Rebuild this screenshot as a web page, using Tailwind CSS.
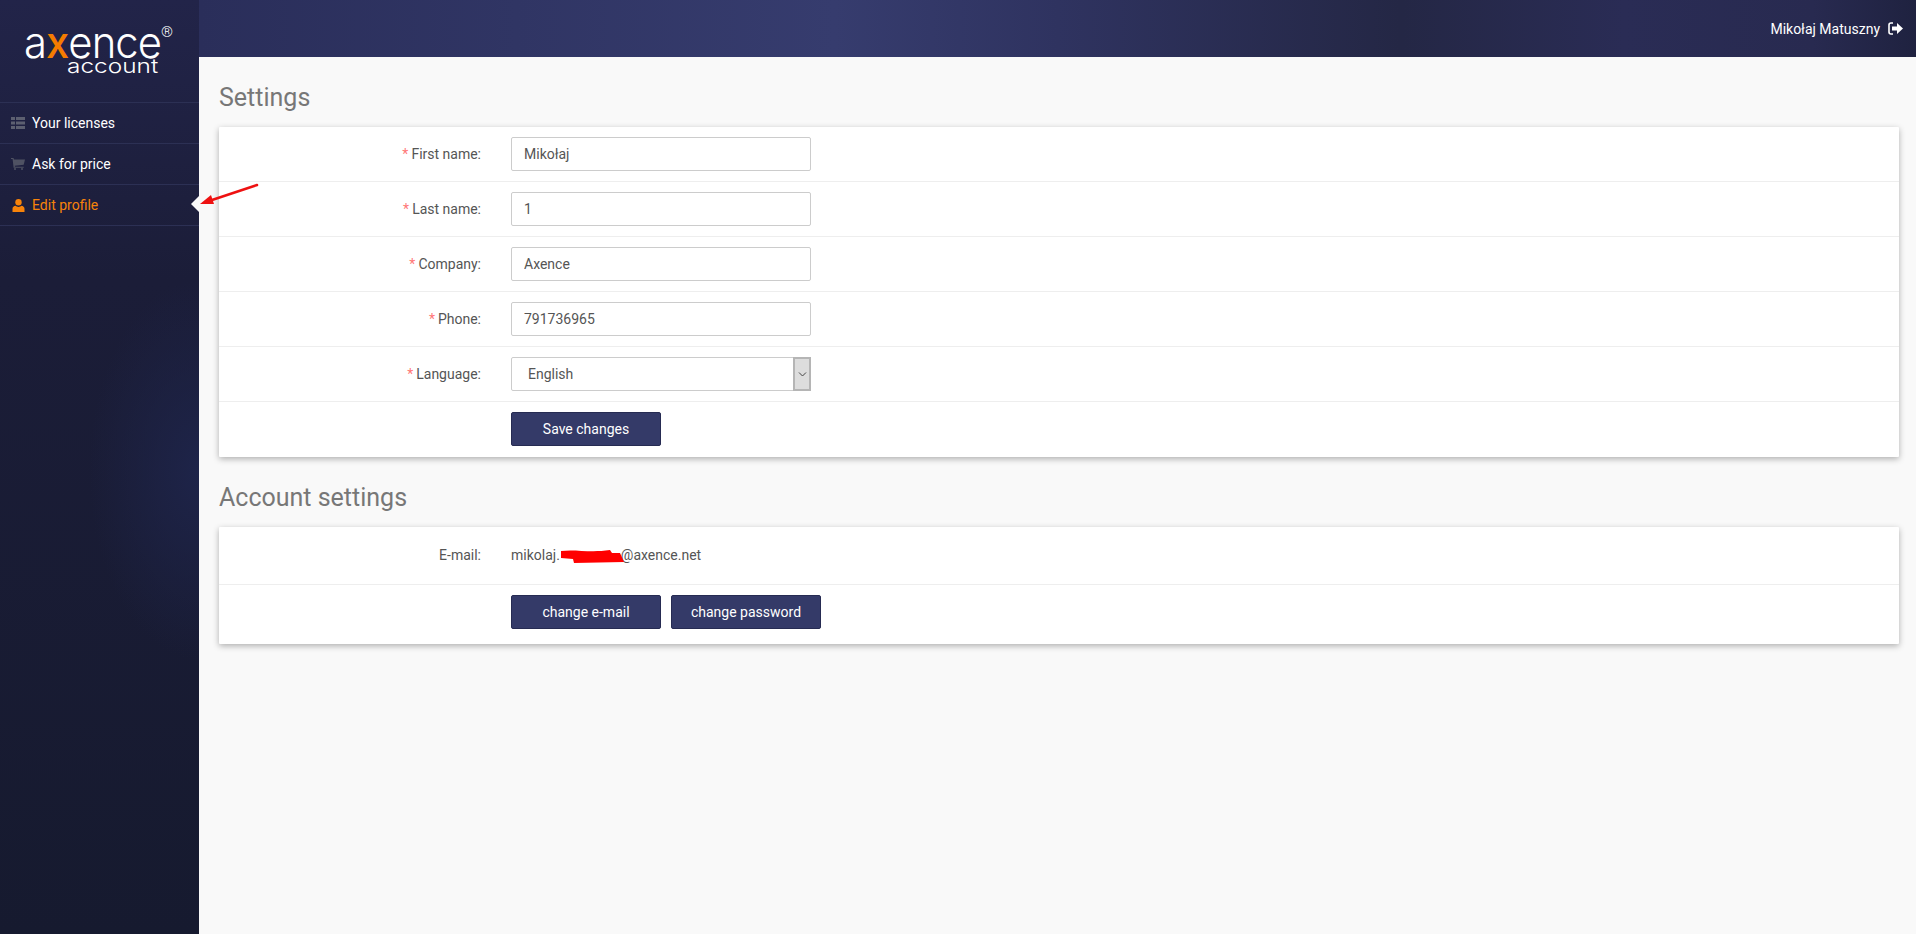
<!DOCTYPE html>
<html lang="en">
<head>
    <meta charset="UTF-8">
    <meta name="viewport" content="width=device-width, initial-scale=1.0">
    <title>Axence Account - Settings</title>
    <script src="https://cdn.jsdelivr.net/npm/@tailwindcss/browser@4"></script>
</head>
<body class="h-screen overflow-hidden font-['Roboto',sans-serif] text-sm text-[#555]">
    <div class="flex h-[934px]">
        <!-- sidebar -->
        <aside class="w-[199px] shrink-0 bg-[radial-gradient(ellipse_110px_190px_at_199px_470px,#1e2449_0%,transparent_100%),linear-gradient(180deg,#222449_0%,#1b1d38_30%,#161a2f_100%)]">
            <div class="relative h-[102px] pl-[24px] pt-[26px] text-white font-['Inter',sans-serif] font-light">
                <div class="h-[32px] text-[44px] leading-[32px] tracking-[-1px] origin-left scale-x-[0.95]">a<span class="text-[#f57c00] font-medium">x</span>ence</div>
                <div class="ml-[43px] mt-[1px] h-[14px] text-[20px] leading-[14px] origin-left scale-x-[1.22]">account</div>
                <span class="absolute left-[161px] top-[22px] text-[15px] leading-[20px] font-['Roboto',sans-serif]">®</span>
            </div>
            <nav class="border-t border-[#2c3054] text-white">
                <a class="flex items-center h-[41px] border-b border-[#2c3054]">
                    <svg class="w-[14px] h-[12px] ml-[11px] mr-[7px]" viewBox="0 0 14 12" fill="#5c5f70">
                        <rect x="0" y="0" width="4" height="3"/><rect x="5" y="0" width="9" height="3"/>
                        <rect x="0" y="4.5" width="4" height="3"/><rect x="5" y="4.5" width="9" height="3"/>
                        <rect x="0" y="9" width="4" height="3"/><rect x="5" y="9" width="9" height="3"/>
                    </svg>
                    <span>Your licenses</span>
                </a>
                <a class="flex items-center h-[41px] border-b border-[#2c3054]">
                    <svg class="w-[14px] h-[12px] ml-[11px] mr-[7px]" viewBox="0 0 14 12" fill="#4f5263">
                        <path d="M0 0h2.5l.5 1.500h11l-1.300 5.200-9 1 .3 1h8.700v1H2.600L1.600 1H0z"/>
                        <circle cx="4" cy="11" r="1"/><circle cx="11" cy="11" r="1"/>
                    </svg>
                    <span>Ask for price</span>
                </a>
                <a class="flex items-center h-[41px] border-b border-[#2c3054] text-[#f7830a]">
                    <svg class="w-[13px] h-[13px] ml-[12px] mr-[7px]" viewBox="0 0 13 13" fill="#f7830a">
                        <circle cx="6.500" cy="3.300" r="3.200"/>
                        <path d="M0.500 13V9.800C0.500 8 2 7 3.400 6.800 4.200 7.500 5.300 7.900 6.500 7.900S8.800 7.500 9.600 6.800C11 7 12.500 8 12.500 9.800V13z"/>
                    </svg>
                    <span>Edit profile</span>
                </a>
            </nav>
        </aside>

        <!-- right column -->
        <div class="flex-1 flex flex-col min-w-0">
            <header class="h-[57px] shrink-0 flex items-center justify-end pr-[13px] text-white bg-[linear-gradient(90deg,#2a2e5a_0%,#363c6e_37%,#2f3360_50%,#242745_70%,#2a2c55_83%,#282a50_94%,#1f2240_100%)]">
                <span>Mikołaj Matuszny</span>
                <svg class="w-[15px] h-[13px] ml-[8px]" viewBox="0 0 15 13">
                    <path d="M5 1H3a2 2 0 0 0-2 2v7a2 2 0 0 0 2 2h2" fill="none" stroke="#fff" stroke-width="1.600"/>
                    <path d="M4 4.500h5V1l6 5.500-6 5.500V8.500H4z" fill="#fff"/>
                </svg>
            </header>

            <main class="relative flex-1 bg-[#f9f9f9] pl-[20px] pr-[17px]">
                <!-- caret on the active menu item -->
                <div class="absolute left-[-8px] top-[139px] w-0 h-0 border-y-[8px] border-y-transparent border-r-[8px] border-r-[#f9f9f9]"></div>
                <!-- red annotation arrow -->
                <svg class="absolute left-[-2px] top-[122px] w-[64px] h-[30px]" viewBox="0 0 64 30">
                    <path d="M60 6L12 22" stroke="#ee1111" stroke-width="2.500" stroke-linecap="round"/>
                    <path d="M3 25L14 16 17 25z" fill="#ee1111"/>
                </svg>

                <div class="h-[70px] pt-[12px] flex items-center text-[25px] text-[#777]">Settings</div>
                <section class="bg-white shadow-[0_2px_6px_rgba(0,0,0,0.3)] rounded-[1px]">
                    <div class="flex items-center h-[55px] border-b border-[#eee]">
                        <label class="w-[262px] text-right"><span class="text-[#f77] mr-[3px]">*</span>First name:</label>
                        <input class="ml-[30px] w-[300px] h-[34px] px-3 border border-[#ccc] rounded-[2px] text-[#555]" value="Mikołaj">
                    </div>
                    <div class="flex items-center h-[55px] border-b border-[#eee]">
                        <label class="w-[262px] text-right"><span class="text-[#f77] mr-[3px]">*</span>Last name:</label>
                        <input class="ml-[30px] w-[300px] h-[34px] px-3 border border-[#ccc] rounded-[2px] text-[#555]" value="1">
                    </div>
                    <div class="flex items-center h-[55px] border-b border-[#eee]">
                        <label class="w-[262px] text-right"><span class="text-[#f77] mr-[3px]">*</span>Company:</label>
                        <input class="ml-[30px] w-[300px] h-[34px] px-3 border border-[#ccc] rounded-[2px] text-[#555]" value="Axence">
                    </div>
                    <div class="flex items-center h-[55px] border-b border-[#eee]">
                        <label class="w-[262px] text-right"><span class="text-[#f77] mr-[3px]">*</span>Phone:</label>
                        <input class="ml-[30px] w-[300px] h-[34px] px-3 border border-[#ccc] rounded-[2px] text-[#555]" value="791736965">
                    </div>
                    <div class="flex items-center h-[55px] border-b border-[#eee]">
                        <label class="w-[262px] text-right"><span class="text-[#f77] mr-[3px]">*</span>Language:</label>
                        <div class="relative ml-[30px] w-[300px] h-[34px]">
                            <select class="appearance-none w-full h-full pl-4 border border-[#ccc] rounded-[2px] bg-white text-[#555]">
                                <option>English</option>
                            </select>
                            <div class="absolute right-0 top-0 w-[18px] h-[34px] bg-[#ddd] border-2 border-[#b5b5b5] flex items-center justify-center">
                                <svg class="w-[9px] h-[5px]" viewBox="0 0 9 5"><path d="M1 0.500L4.500 4 8 0.500" fill="none" stroke="#444" stroke-width="1"/></svg>
                            </div>
                        </div>
                    </div>
                    <div class="flex items-start h-[55px] pt-[10px]">
                        <button class="ml-[292px] w-[150px] h-[34px] bg-[#343a68] border border-[#262b52] rounded-[2px] text-white">Save changes</button>
                    </div>
                </section>

                <div class="h-[70px] pt-[12px] flex items-center text-[25px] text-[#777]">Account settings</div>
                <section class="bg-white shadow-[0_2px_6px_rgba(0,0,0,0.3)] rounded-[1px]">
                    <div class="flex items-center h-[58px] pb-[2px] border-b border-[#eee]">
                        <label class="w-[262px] text-right">E-mail:</label>
                        <div class="relative ml-[30px]">
                            mikolaj.<span class="inline-block w-[61px]"></span>@axence.net
                            <svg class="absolute left-[49px] top-[3px] w-[65px] h-[16px]" viewBox="0 0 65 16">
                                <path d="M1 3C15 1 30 5 50 2L52 5 60 5 64 14 14 15 13 11 1 10z" fill="#f00"/>
                            </svg>
                        </div>
                    </div>
                    <div class="flex items-start h-[59px] pt-[10px]">
                        <button class="ml-[292px] w-[150px] h-[34px] bg-[#343a68] border border-[#262b52] rounded-[2px] text-white">change e-mail</button>
                        <button class="ml-[10px] w-[150px] h-[34px] bg-[#343a68] border border-[#262b52] rounded-[2px] text-white">change password</button>
                    </div>
                </section>
            </main>
        </div>
    </div>
</body>
</html>
